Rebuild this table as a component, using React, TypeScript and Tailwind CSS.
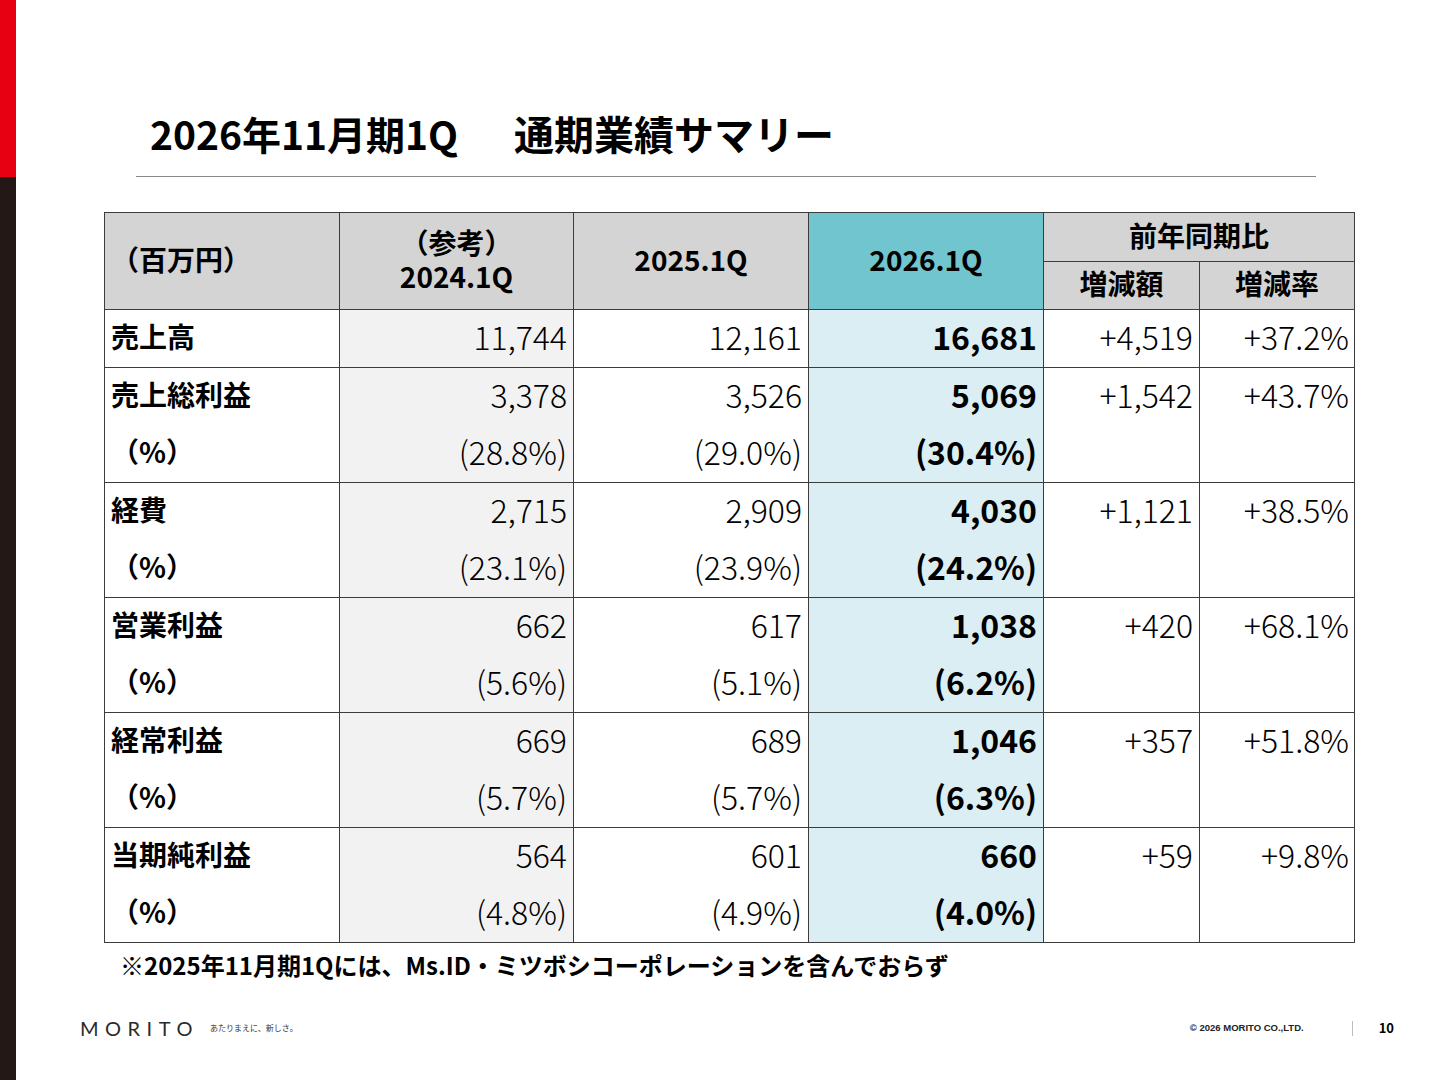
import React from "react";

const JP = "font-['Noto_Sans_CJK_JP',_'Noto_Sans',_sans-serif]";

type Row = {
  label: string;
  v: string[];
  p?: string[];
  d: string;
  r: string;
};

const rows: Row[] = [
  { label: "売上高", v: ["11,744", "12,161", "16,681"], d: "+4,519", r: "+37.2%" },
  { label: "売上総利益", v: ["3,378", "3,526", "5,069"], p: ["(28.8%)", "(29.0%)", "(30.4%)"], d: "+1,542", r: "+43.7%" },
  { label: "経費", v: ["2,715", "2,909", "4,030"], p: ["(23.1%)", "(23.9%)", "(24.2%)"], d: "+1,121", r: "+38.5%" },
  { label: "営業利益", v: ["662", "617", "1,038"], p: ["(5.6%)", "(5.1%)", "(6.2%)"], d: "+420", r: "+68.1%" },
  { label: "経常利益", v: ["669", "689", "1,046"], p: ["(5.7%)", "(5.7%)", "(6.3%)"], d: "+357", r: "+51.8%" },
  { label: "当期純利益", v: ["564", "601", "660"], p: ["(4.8%)", "(4.9%)", "(4.0%)"], d: "+59", r: "+9.8%" },
];

const COLS = "grid grid-cols-[235px_234px_235px_235px_156px_154px]";

function Cell({
  lines,
  className,
  textClass,
}: {
  lines: string[];
  className: string;
  textClass: string;
}) {
  return (
    <div className={`flex flex-col ${className}`}>
      {lines.map((t, i) => (
        <div key={i} className={`h-[57px] pb-[6px] flex items-center ${textClass}`}>
          {t}
        </div>
      ))}
    </div>
  );
}

export default function App() {
  return (
    <div className={`w-[1440px] h-[1080px] flex bg-white text-black ${JP}`}>
      <div className="w-4 flex flex-col shrink-0">
        <div className="h-[177px] bg-[#e60012]" />
        <div className="flex-1 bg-[#231815]" />
      </div>
      <div className="flex-1 flex flex-col">
        <h1 className="mt-[109px] ml-[134px] h-[48px] flex items-center font-bold whitespace-nowrap">
          <span className="text-[39px] leading-[48px]">2026年11月期1Q</span>
          <span className="ml-[56px] text-[40px] leading-[48px]">通期業績サマリー</span>
        </h1>
        <div className="mt-[19px] ml-[120px] w-[1180px] h-px bg-[#8a8a8a]" />

        <div className="mt-[35px] ml-[88px] w-[1251px] border border-[#3c3c3c]">
          {/* header */}
          <div className={`${COLS} grid-rows-[49px_47px] border-b border-[#3c3c3c] bg-[#d4d4d4] font-bold text-[28px]`}>
            <div className="row-span-2 border-r border-[#3c3c3c] flex items-center pl-[6px] pb-[4px]">（百万円）</div>
            <div className="row-span-2 border-r border-[#3c3c3c] flex items-center justify-center pb-[4px]">
              <p className="text-center leading-[34px]">
                （参考）
                <br />
                2024.1Q
              </p>
            </div>
            <div className="row-span-2 border-r border-[#3c3c3c] flex items-center justify-center pb-[4px]">2025.1Q</div>
            <div className="row-span-2 border-r border-[#3c3c3c] bg-[#70c5cf] flex items-center justify-center pb-[4px]">2026.1Q</div>
            <div className="col-span-2 border-b border-[#3c3c3c] flex items-center justify-center pb-[4px]">前年同期比</div>
            <div className="border-r border-[#3c3c3c] flex items-center justify-center pb-[5px]">増減額</div>
            <div className="flex items-center justify-center pb-[5px]">増減率</div>
          </div>

          {rows.map((row, idx) => {
            const last = idx === rows.length - 1;
            const pct = row.p;
            return (
              <div
                key={row.label}
                className={`${COLS} ${last ? "" : "border-b border-[#3c3c3c]"}`}
              >
                <Cell
                  lines={pct ? [row.label, "（%）"] : [row.label]}
                  className="border-r border-[#3c3c3c]"
                  textClass="pl-[6px] font-bold text-[28px]"
                />
                <Cell
                  lines={pct ? [row.v[0], pct[0]] : [row.v[0]]}
                  className="border-r border-[#3c3c3c] bg-[#f2f2f2]"
                  textClass="justify-end pr-[6px] font-light text-[32px]"
                />
                <Cell
                  lines={pct ? [row.v[1], pct[1]] : [row.v[1]]}
                  className="border-r border-[#3c3c3c]"
                  textClass="justify-end pr-[6px] font-light text-[32px]"
                />
                <Cell
                  lines={pct ? [row.v[2], pct[2]] : [row.v[2]]}
                  className="border-r border-[#3c3c3c] bg-[#daeef3]"
                  textClass="justify-end pr-[6px] font-bold text-[32px]"
                />
                <Cell
                  lines={pct ? [row.d, ""] : [row.d]}
                  className="border-r border-[#3c3c3c]"
                  textClass="justify-end pr-[6px] font-light text-[32px]"
                />
                <Cell
                  lines={pct ? [row.r, ""] : [row.r]}
                  className=""
                  textClass="justify-end pr-[5px] font-light text-[32px]"
                />
              </div>
            );
          })}
        </div>

        <p className="mt-[6px] ml-[104px] text-[24px] leading-[32px] font-bold whitespace-nowrap">
          ※2025年11月期1Qには、Ms.ID・ミツボシコーポレーションを含んでおらず
        </p>

        <div className="mt-[37px] flex items-center h-[20px] pr-[46px]">
          <span className="ml-[64px] font-['Lato',_sans-serif] text-[20px] leading-[20px] font-normal tracking-[6.5px] text-[#2a2a2a]">
            MORITO
          </span>
          <span className="ml-[11px] text-[8px] text-[#333]">あたりまえに、新しさ。</span>
          <div className="flex-1" />
          <span className="font-['Liberation_Sans',_sans-serif] text-[9.5px] font-bold text-[#222]">
            © 2026 MORITO CO.,LTD.
          </span>
          <div className="ml-[48px] w-px h-[15px] bg-[#bdbdbd]" />
          <span className="ml-[26px] text-[13px] font-bold">10</span>
        </div>
      </div>
    </div>
  );
}
